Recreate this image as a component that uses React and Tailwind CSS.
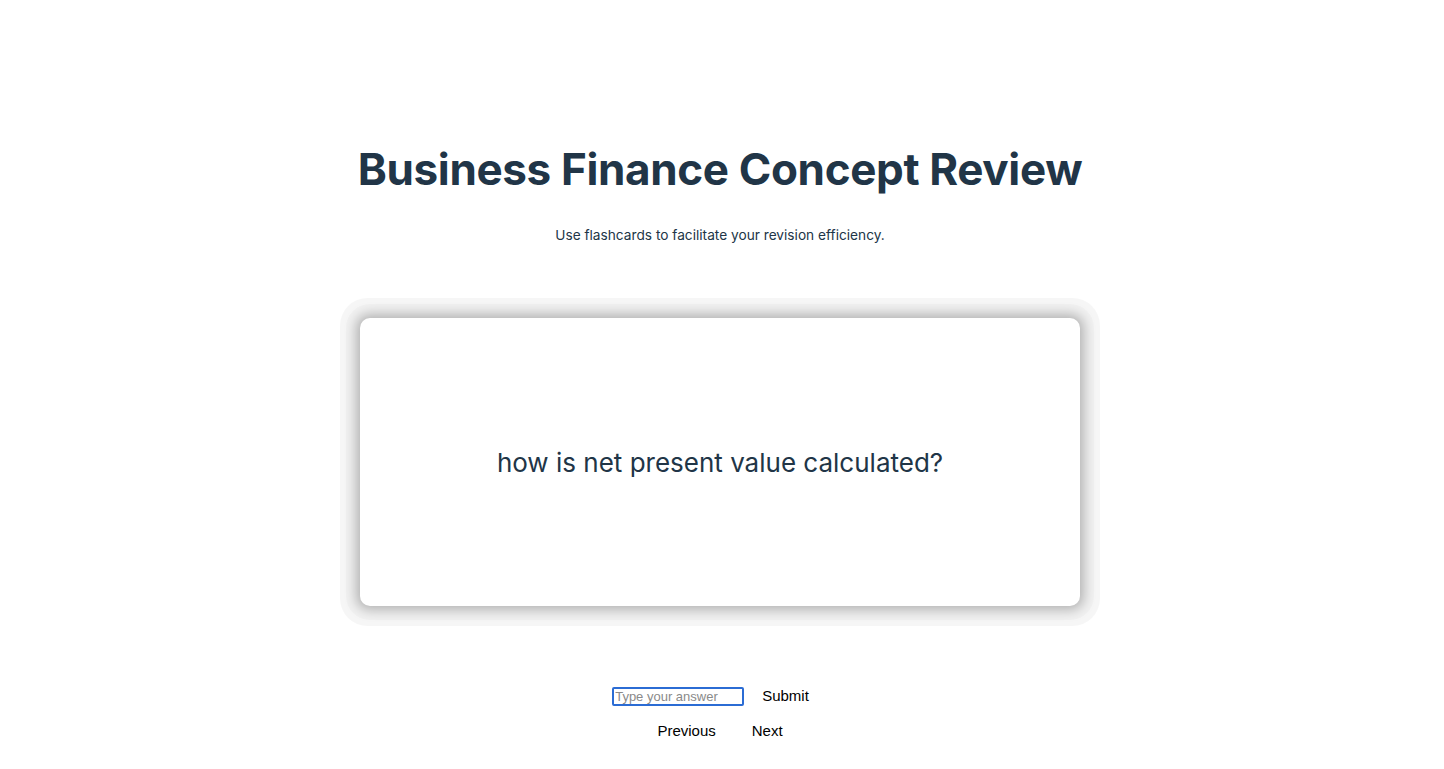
import React, { useState } from 'react';

const cards = [
  { question: "how is net present value calculated?" },
];

function Flashcard({ text }) {
  return (
    <div className="w-[720px] h-[288px] rounded-[10px] bg-white flex items-center justify-center shadow-[0_0_0_20px_rgba(0,0,0,0.035),0_0_0_14px_rgba(0,0,0,0.02),0_0_12px_4px_rgba(0,0,0,0.25)]">
      <p className="text-[26px] text-[#213547]">{text}</p>
    </div>
  );
}

export default function App() {
  const [index, setIndex] = useState(0);
  const [answer, setAnswer] = useState("");

  return (
    <div className="min-h-[769px] bg-white flex flex-col items-center pr-[4px] font-['Inter',sans-serif] text-[#213547]">
      <h1 className="mt-[140px] text-[44px] leading-[58px] font-bold tracking-[-0.35px]">Business Finance Concept Review</h1>
      <p className="mt-[27px] text-[13.7px] leading-[20px]">Use flashcards to facilitate your revision efficiency.</p>

      <div className="mt-[73px]">
        <Flashcard text={cards[index].question} />
      </div>

      <div className="mt-[79px] mr-[19px] flex items-center gap-[18px] font-['Liberation_Sans',Arial,sans-serif] text-black">
        <input
          type="text"
          value={answer}
          onChange={(e) => setAnswer(e.target.value)}
          placeholder="Type your answer"
          className="w-[132px] h-[19px] border-2 border-[#2b6cd4] rounded-[2px] px-[1px] text-[13px] placeholder:text-[#8a8a8a] outline-none"
        />
        <button className="text-[15px] px-0">Submit</button>
      </div>

      <div className="mt-[12px] flex items-center gap-[36px] font-['Liberation_Sans',Arial,sans-serif] text-[15px] text-black">
        <button onClick={() => setIndex(Math.max(0, index - 1))}>Previous</button>
        <button onClick={() => setIndex(Math.min(cards.length - 1, index + 1))}>Next</button>
      </div>
    </div>
  );
}
